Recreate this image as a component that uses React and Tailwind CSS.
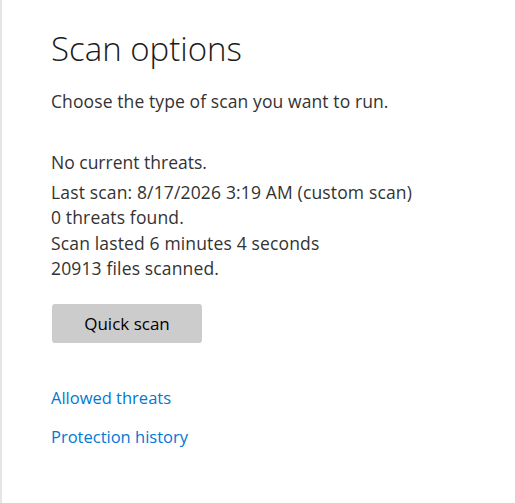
import React from 'react';

const font = { fontFamily: '"Open Sans", "Noto Sans", sans-serif' };

// Summary of the last run shown under the heading
const lastScan = [
  'Last scan: 8/17/2026 3:19 AM (custom scan)',
  '0 threats found.',
  'Scan lasted 6 minutes 4 seconds',
  '20913 files scanned.',
];

const App = () => {
  return (
    <div className="flex min-h-[503px] w-[515px] bg-white" style={font}>
      <div className="w-[2px] shrink-0 bg-[#e5e5e5]"></div>
      <div className="flex flex-col pl-[49px] pt-[29px] text-[#333]">
        <h1 className="text-[33px] leading-[40px] font-light text-[#1a1a1a]">Scan options</h1>
        <p className="mt-[20px] text-[17.5px] leading-[24px] tracking-[0.1px]">Choose the type of scan you want to run.</p>

        <p className="mt-[37px] text-[17.5px] leading-[24px]">No current threats.</p>
        <div className="mt-[6px] flex flex-col text-[17.5px] leading-[25.3px] tracking-[0.15px]">
          {lastScan.map((line) => (
            <span key={line}>{line}</span>
          ))}
        </div>

        <button className="mt-[23px] ml-[1px] h-[39px] w-[150px] rounded-[3px] bg-[#cccccc] text-[17px] text-black">
          Quick scan
        </button>

        <div className="mt-[43px] flex flex-col gap-[15px] text-[16.5px] leading-[24px] text-[#0078d4]">
          <a href="#">Allowed threats</a>
          <a href="#">Protection history</a>
        </div>
      </div>
    </div>
  );
};

export default App;
